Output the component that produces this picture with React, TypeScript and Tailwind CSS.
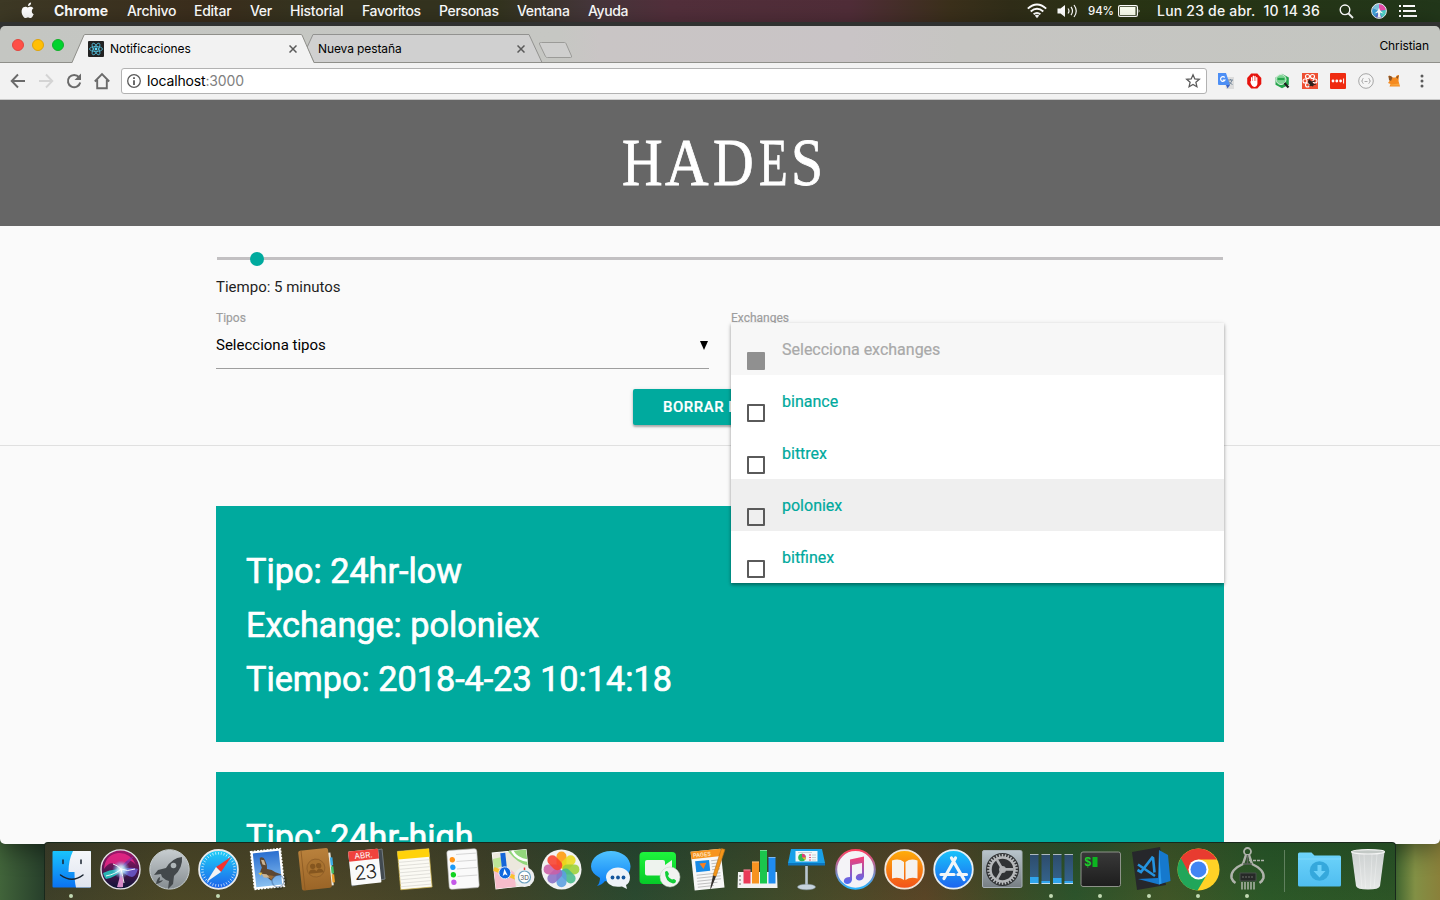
import React from "react";

const menuItems = [
  { label: "Chrome", cls: "w-[73px] font-bold tracking-[0px]" },
  { label: "Archivo", cls: "w-[67px] font-medium tracking-[-0.32px]" },
  { label: "Editar", cls: "w-[56px] font-medium tracking-[-0.25px]" },
  { label: "Ver", cls: "w-[40px] font-medium tracking-[-0.3px]" },
  { label: "Historial", cls: "w-[72px] font-medium tracking-[-0.22px]" },
  { label: "Favoritos", cls: "w-[77px] font-medium tracking-[-0.32px]" },
  { label: "Personas", cls: "w-[78px] font-medium tracking-[-0.35px]" },
  { label: "Ventana", cls: "w-[71px] font-medium tracking-[-0.35px]" },
  { label: "Ayuda", cls: "w-[60px] font-medium tracking-[-0.4px]" },
];

const APPLE =
  "M10.4 5.3c-.02-1.6 1.3-2.4 1.36-2.44-.74-1.08-1.9-1.23-2.3-1.25-.98-.1-1.9.58-2.4.58-.5 0-1.26-.56-2.07-.55C3.92 1.66 2.94 2.26 2.4 3.2c-1.1 1.9-.28 4.74.8 6.3.52.76 1.14 1.6 1.96 1.58.79-.03 1.08-.5 2.03-.5.95 0 1.22.5 2.05.49.85-.02 1.38-.77 1.9-1.53.6-.88.85-1.73.86-1.77-.02-.01-1.6-.62-1.6-2.47z";

function MenuBar() {
  return (
    <div className="flex h-[22px] shrink-0 items-center bg-[linear-gradient(90deg,#3d3925_0,#3b2d1c_210px,#36331f_290px,#33331f_500px,#45363a_590px,#522f3b_670px,#502d38_850px,#3b301b_950px,#302d18_1010px,#293414_1130px,#22371a_1440px)] pl-5 text-[14px] leading-[22px] text-white">
      <div className="w-[34px]">
        <svg width="16" height="18" viewBox="0 0 15 18" fill="white">
          <path transform="translate(-1.2 2.8) scale(1.2)" d={APPLE} />
          <path d="M10.600 0.4c.1 2-1.3 3.4-3.100 3.600C7.300 2 9 .5 10.600.4z" />
        </svg>
      </div>
      {menuItems.map((m) => (
        <span key={m.label} className={"whitespace-nowrap " + m.cls}>
          {m.label}
        </span>
      ))}
      <div className="ml-auto flex items-center">
        <svg width="20" height="16" viewBox="0 0 20 16" fill="none" stroke="white" strokeWidth="1.9" className="mr-[10px]">
          <path d="M.8 5.6Q10-2.600 19.200 5.600" />
          <path d="M3.700 8.500Q10 3 16.300 8.500" />
          <path d="M6.600 11.300Q10 8.500 13.400 11.300" />
          <path d="M7.800 12.600Q10 11 12.200 12.600L10 15.300z" fill="white" stroke="none" />
        </svg>
        <svg width="22" height="16" viewBox="0 0 22 16" fill="none" stroke="white" strokeWidth="1.2" className="mr-[9px]">
          <path d="M.5 5.500h3L8 2v12l-4.500-3.500h-3z" fill="white" stroke="none" />
          <path d="M11 5.500q2 2.500 0 5M14 3.800q3 4.200 0 8.400M17 2q4.500 6 0 12" />
        </svg>
        <span className="w-[30px] whitespace-nowrap text-[11.500px] font-medium tracking-[-0.1px]">94%</span>
        <svg width="23" height="12" viewBox="0 0 23 12">
          <rect x=".6" y=".6" width="18.800" height="10.800" rx="1.500" fill="none" stroke="white" strokeWidth="1.200" />
          <rect x="2" y="2" width="15.500" height="8" fill="#fbfff0" />
          <path d="M20.700 4q1.800 2 0 4z" fill="white" />
        </svg>
        <span className="ml-4 w-[182px] whitespace-nowrap font-medium tracking-[0.21px]">
          Lun 23 de abr.&nbsp; 10 14 36
        </span>
        <svg width="15" height="15" viewBox="0 0 15 15" fill="none" stroke="white" strokeWidth="1.400">
          <circle cx="6" cy="5.800" r="4.800" />
          <path d="M9.500 9.500l4.500 4.500" strokeWidth="1.800" />
        </svg>
        <svg width="16" height="16" viewBox="0 0 16 16" className="ml-[17px]">
          <circle cx="8" cy="8" r="7.400" fill="#5a69c9" />
          <path d="M8 8L1.500 5.500A7 7 0 0 1 8 1z" fill="#7fc4dd" />
          <path d="M8 8V1a7 7 0 0 1 7 6z" fill="#e94ba8" />
          <path d="M8 8L1.500 5.500A7 7 0 0 0 4 14z" fill="#3d9fd8" />
          <path d="M8 8l7-1a7 7 0 0 1-4 7.500z" fill="#4bd3c9" />
          <circle cx="8" cy="8" r="7.400" fill="none" stroke="#eef3ef" />
          <path d="M3 10.500q4-2 5-6 1 4 5 6-3-.5-4-1 0 3 1 5H6.500Q7.500 12 7 9.500q-1.500.7-4 1z" fill="white" />
        </svg>
        <svg width="18" height="12" viewBox="0 0 18 12" className="mr-[23px] ml-3" fill="white">
          <path d="M0 0h2v2H0zM4 0h12v2H4zM0 5h2v2H0zM4 5h13v2H4zM0 10h2v2H0zM4 10h14v2H4z" />
        </svg>
      </div>
    </div>
  );
}

function ReactIcon() {
  return (
    <svg width="16" height="16" viewBox="0 0 16 16">
      <rect width="16" height="16" rx="1" fill="#222" />
      <g fill="none" stroke="#53c1de" strokeWidth=".8">
        <ellipse cx="8" cy="8" rx="6.500" ry="2.500" />
        <ellipse cx="8" cy="8" rx="6.500" ry="2.500" transform="rotate(60 8 8)" />
        <ellipse cx="8" cy="8" rx="6.500" ry="2.500" transform="rotate(120 8 8)" />
      </g>
      <circle cx="8" cy="8" r="1.400" fill="#61dafb" />
    </svg>
  );
}

function CloseMark() {
  return (
    <svg width="8" height="8" viewBox="0 0 8 8" stroke="#5a5a5a" strokeWidth="1.500">
      <path d="M.5.5l7 7M7.500.5l-7 7" />
    </svg>
  );
}

function TabStrip() {
  return (
    <div className="relative h-[37px] shrink-0 rounded-t-[5px] bg-[linear-gradient(90deg,#c4c6c2_0,#c6c7c3_560px,#c9c5c5_600px,#c9c4c6_850px,#c6c5c2_960px,#c4c6c1_1440px)]">
      <svg className="absolute top-0 left-0" width="1440" height="37" viewBox="0 26 1440 37" fill="none" strokeWidth="1">
        <path d="M314 62.500L307 47.500 313 34.500H529L542 62.500z" fill="#d0d0d0" stroke="#929290" />
        <path d="M541.500 42.500h23q1 0 1.500 1l5.500 12.500q.5 1.500-1 1.500h-23q-1.500 0-2-1L539.500 44q-.3-1.500 1-1.500z" fill="#cfcfce" stroke="#9b9b98" />
        <path d="M0 62.500H1440" stroke="#8f8f8a" />
        <path d="M72 63L84 35q.3-.5 1-.5H301q.7 0 1 .5L314 63z" fill="#f2f2f2" />
        <path d="M72 62.500L84 35q.3-.5 1-.5H301q.7 0 1 .5L314 62.500" stroke="#8f8f8a" />
      </svg>
      <div className="relative flex h-full items-center pb-px text-[12px] text-black">
        <div className="ml-3 flex w-[76px] gap-2 pb-0.5 pt-[3px]">
          <i className="h-3 w-3 rounded-full border border-[#e2463f] bg-[#ff4f47]" />
          <i className="h-3 w-3 rounded-full border border-[#dfa30a] bg-[#ffbf05]" />
          <i className="h-3 w-3 rounded-full border border-[#12b02a] bg-[#00d32e]" />
        </div>
        <div className="flex h-full w-[230px] items-center pt-[9px]">
          <ReactIcon />
          <span className="ml-1.5 w-[179px] whitespace-nowrap tracking-[-0.05px]">Notificaciones</span>
          <CloseMark />
        </div>
        <span className="w-[199px] whitespace-nowrap pt-[9px] tracking-[-0.1px]">Nueva pestaña</span>
        <div className="pt-[9px]">
          <CloseMark />
        </div>
        <span className="mr-[11px] ml-auto whitespace-nowrap pt-[3px] tracking-[-0.100px]">Christian</span>
      </div>
    </div>
  );
}

function NavBtn({ d, c }: { d: string; c: string }) {
  return (
    <div className="flex w-7 justify-center">
      <svg width="18" height="18" viewBox="0 0 18 18" fill="none" stroke={c} strokeWidth="1.900">
        <path d={d} />
      </svg>
    </div>
  );
}

function Ext({ children }: { children: React.ReactNode }) {
  return (
    <div className="flex w-7 justify-center">
      <svg width="16" height="16" viewBox="0 0 16 16">
        {children}
      </svg>
    </div>
  );
}

function Toolbar() {
  return (
    <div className="flex h-[37px] shrink-0 items-center border-b border-[#c9c9c9] bg-[#f2f2f2] pl-1">
      <NavBtn c="#6a6a6a" d="M16 9H3M9 2.500L2.700 9 9 15.500" />
      <NavBtn c="#d4d4d4" d="M2 9h13M9 2.500L15.300 9 9 15.500" />
      <div className="flex w-7 justify-center">
        <svg width="18" height="18" viewBox="0 0 18 18">
          <path d="M14 5.200A6.200 6.200 0 1 0 15.200 10.500" fill="none" stroke="#6a6a6a" strokeWidth="2" />
          <path d="M16 1.500V8H9.500z" fill="#6a6a6a" />
        </svg>
      </div>
      <NavBtn c="#6a6a6a" d="M1.800 9.500L9 2.200 16.200 9.500M4.200 8v8.200h9.600V8" />
      <div className="ml-[5px] flex h-[26px] w-[1086px] items-center rounded-[3px] border border-[#b2b2b2] bg-white pl-[5px] text-[14px]">
        <svg width="14" height="14" viewBox="0 0 14 14">
          <circle cx="7" cy="7" r="6.300" fill="none" stroke="#5a5a5a" strokeWidth="1.300" />
          <path d="M6.100 3.200h1.800V5H6.100zM6.100 6.200h1.800V11H6.100z" fill="#5a5a5a" />
        </svg>
        <span className="ml-1.5 pb-px whitespace-nowrap tracking-[-0.15px] text-black">
          localhost<span className="text-[#808080]">:3000</span>
        </span>
        <svg width="16" height="16" viewBox="0 0 16 16" className="mr-[5px] ml-auto" fill="none" stroke="#5a5a5a" strokeWidth="1.300">
          <path d="M8 1.800l1.800 4.100 4.500.4-3.400 3 1 4.400L8 11.400l-3.900 2.300 1-4.400-3.400-3 4.500-.4z" />
        </svg>
      </div>
      <div className="ml-[5px] flex">
        <Ext>
          <path d="M6 4h10v12H8z" fill="#dcdcdc" />
          <path d="M0 0h8l4 12H1q-1 0-1-1z" fill="#4d8ff5" />
          <path d="M8 12h4l-2.500 3.500z" fill="#3a62c4" />
          <path d="M6.700 4.500A2.300 2.300 0 1 0 7 7H4.700" fill="none" stroke="white" strokeWidth="1.200" />
          <path d="M10 7h5M12.500 6v1M14 7q-.5 3-3 4.500M11 8.500q1 2 3.500 3" fill="none" stroke="#6b7f93" strokeWidth=".9" />
        </Ext>
        <Ext>
          <path d="M5.200.5h6.100L15.300 5v6L11.300 15.500H5.200L1.200 11V5z" fill="#e6130d" />
          <path d="M4 8l1 .8V4.500q.7-.8 1.300 0V8h.4V3q.7-.8 1.300 0v5h.4V3.200q.7-.8 1.300 0V8h.4V4.500q.7-.8 1.300 0V11q-.6 3-3.200 3Q6 13.500 5 11z" fill="white" />
        </Ext>
        <Ext>
          <path d="M8 .8l6.800 3.600v7.400L8 15.300 1.500 11.800V4.400z" fill="#25a54c" />
          <circle cx="7" cy="6.500" r="5" fill="#7ed494" stroke="#dceee0" strokeWidth="1" />
          <path d="M3.500 6h7" stroke="#25a54c" strokeWidth="2.200" />
          <path d="M10.500 10l4 4.500" stroke="#1e1e1e" strokeWidth="2.200" />
        </Ext>
        <Ext>
          <rect width="16" height="16" fill="#ee4f32" />
          <g fill="none" stroke="white" strokeWidth="1.100">
            <circle cx="5.500" cy="3.500" r="2" />
            <circle cx="10.500" cy="3.500" r="2" />
            <circle cx="3" cy="8" r="2" />
            <circle cx="13" cy="8" r="2" />
            <circle cx="5.500" cy="12" r="2" />
          </g>
          <path d="M7 6l5 5-1 2.500-3-1-2-4z" fill="#2d211c" />
          <path d="M6 10l7-2M7 13l7-2" stroke="#2d211c" />
        </Ext>
        <Ext>
          <rect width="16" height="16" rx="1" fill="#ef2b10" />
          <circle cx="3" cy="8" r="1.400" fill="white" />
          <circle cx="6.800" cy="8" r="1.400" fill="white" />
          <circle cx="10.600" cy="8" r="1.400" fill="white" />
          <path d="M13.600 5.500v5" stroke="white" />
        </Ext>
        <Ext>
          <circle cx="8" cy="8" r="7.300" fill="#f5f5f5" stroke="#a5a5a5" />
          <path d="M5.500 5.500q-1.200 0-1 1.200T3.500 8q1 .2 1 1.300t1 1.200M10.500 5.500q1.200 0 1 1.200T12.500 8q-1 .2-1 1.300t-1 1.200M6.500 8.500h3" fill="none" stroke="#999" strokeWidth=".8" />
        </Ext>
        <Ext>
          <path d="M2.500 3q2-1 4 1.500h3Q11 1.500 13 2.200L12.500 8l1.500 5.500H3.500L4.500 11 2 10l1.500-2z" fill="#f58a1f" />
          <path d="M2.500 3q2-1 4 1.500L5 8 3 7zM13 2.200L11.500 6 10 4z" fill="#8d5526" />
          <path d="M5 11.500l8-1v2H5z" fill="#f9a53c" />
        </Ext>
        <Ext>
          <g fill="#5a5a5a">
            <circle cx="8" cy="3" r="1.500" />
            <circle cx="8" cy="8" r="1.500" />
            <circle cx="8" cy="13" r="1.500" />
          </g>
        </Ext>
      </div>
    </div>
  );
}

const exchanges = [
  { name: "binance", hover: false },
  { name: "bittrex", hover: false },
  { name: "poloniex", hover: true },
  { name: "bitfinex", hover: false },
];

function ExchangeMenu() {
  return (
    <div className="absolute top-3 left-0 z-10 w-[493px] bg-white text-[16px] leading-[22px] shadow-[0_2px_3px_rgba(0,0,0,0.3),0_1px_5px_rgba(0,0,0,0.14)] [-webkit-text-stroke:0.2px]">
      <div className="flex h-[52px] bg-[#f7f7f7] pl-4 text-[#a9a9a9]">
        <span className="mt-[29px] h-[18px] w-[18px] rounded-[1px] bg-[#909090]" />
        <span className="mt-4 ml-[17px]">Selecciona exchanges</span>
      </div>
      {exchanges.map((e) => (
        <div key={e.name} className={"flex h-[52px] pl-4 text-[#00a99d] " + (e.hover ? "bg-[#efefef]" : "bg-white")}>
          <span className="mt-[29px] h-[18px] w-[18px] rounded-[1px] border-2 border-[#5a5a5a]" />
          <span className="mt-4 ml-[17px]">{e.name}</span>
        </div>
      ))}
    </div>
  );
}

function Card({ lines }: { lines: string[] }) {
  return (
    <div className="h-[236px] shrink-0 bg-[#00aa9e] px-[30px] pt-[38px] text-[34.2px] leading-[54px] text-white [-webkit-text-stroke:0.7px_white]">
      {lines.map((l) => (
        <div key={l} className="whitespace-nowrap">
          {l}
        </div>
      ))}
    </div>
  );
}

function Page() {
  return (
    <div className="flex min-h-0 flex-1 flex-col overflow-hidden rounded-b-[5px] bg-[#fafafa] font-[Roboto,sans-serif] text-[15px] text-[#1f1f1f]">
      <header className="flex h-[126px] shrink-0 justify-center bg-[#666] pt-[27px] pl-[2px] font-['Liberation_Serif',serif] text-[67px] leading-[70px] text-white [-webkit-text-stroke:0.8px_white]">
        <h1 className="whitespace-nowrap">
          <span className="inline-block w-[43px] origin-left scale-x-[0.84]">H</span>
          <span className="inline-block w-[48px] origin-left scale-x-[0.9]">A</span>
          <span className="inline-block w-[46px] origin-left scale-x-[0.84]">D</span>
          <span className="inline-block w-[32px] origin-left scale-x-[0.7]">E</span>
          <span className="inline-block w-[30px] origin-left scale-x-[0.86]">S</span>
        </h1>
      </header>
      <section className="h-[220px] shrink-0 border-b border-[#e0e0e0] px-[216px]">
        <div className="flex h-[65px] items-center">
          <div className="mx-px h-[3px] flex-1 bg-[#c2c0c2]">
            <div className="relative top-[-5px] left-[33px] h-[14px] w-[14px] rounded-full bg-[#00aa9e]" />
          </div>
        </div>
        <p className="-mt-[15px] h-[35px] leading-[22px]">Tiempo: 5 minutos</p>
        <div className="flex">
          <div className="w-[493px]">
            <div className="text-[12px] leading-[14px] text-[#9e9e9e] [-webkit-text-stroke:0.2px]">Tipos</div>
            <div className="flex h-[44px] justify-between border-b border-[#9e9e9e] pt-[9px] leading-[22px]">
              <span className="text-black">Selecciona tipos</span>
              <svg width="8" height="9" viewBox="0 0 8 9" className="mt-[7px] mr-[1px]">
                <path d="M0 0h8L4 9z" fill="black" />
              </svg>
            </div>
          </div>
          <div className="relative ml-[22px] w-[493px]">
            <div className="text-[12px] leading-[14px] text-[#9e9e9e] [-webkit-text-stroke:0.2px]">Exchanges</div>
            <ExchangeMenu />
          </div>
        </div>
        <div className="mx-auto mt-5 h-9 w-[174px] overflow-hidden rounded-[2px] bg-[#00aa9e] pl-[30px] font-medium leading-9 tracking-[0.5px] whitespace-nowrap text-white shadow-[0_2px_2px_rgba(0,0,0,0.25),0_1px_4px_rgba(0,0,0,0.15)] [-webkit-text-stroke:0.2px]">
          BORRAR D
        </div>
      </section>
      <section className="flex flex-col gap-[30px] px-[216px] pt-[60px]">
        <Card lines={["Tipo: 24hr-low", "Exchange: poloniex", "Tiempo: 2018-4-23 10:14:18"]} />
        <Card lines={["Tipo: 24hr-high"]} />
      </section>
    </div>
  );
}

function Defs() {
  const g = (id: string, a: string, b: string) => (
    <linearGradient id={id} x1="0" y1="0" x2="0" y2="1">
      <stop offset="0" stopColor={a} />
      <stop offset="1" stopColor={b} />
    </linearGradient>
  );
  return (
    <svg width="0" height="0" className="absolute">
      <defs>
        {g("gFinder", "#19c4fb", "#0a72f3")}
        {g("gFace", "#f5f7fa", "#dfe4ee")}
        {g("gSilver", "#c7cdd0", "#858c90")}
        {g("gSafari", "#1fd0f8", "#1c62ea")}
        {g("gSky", "#2a6fd0", "#8ac0f0")}
        {g("gLeather", "#b9813c", "#9b6527")}
        {g("gMsg", "#4fc3ff", "#0a7df5")}
        {g("gGreen", "#1ef53d", "#06ca28")}
        {g("gBook", "#ffae09", "#f2511b")}
        {g("gStore", "#19c4fb", "#1d63ef")}
        {g("gFolder", "#6ed4fb", "#4fbdf0")}
        {g("gTrash", "#d6d8da", "#f0f0f2")}
        {g("gNote", "#fa3d72", "#4b6cf8")}
        {g("gPref", "#b9c5cc", "#777e83")}
        {g("gRing", "#ff4060", "#29b6ff")}
        {g("gTerm", "#393939", "#1d1d1d")}
        {g("gCpu", "#2d4b6b", "#35658d")}
        {g("gSiri", "#a3186c", "#0b1436")}
        <radialGradient id="gGlow" cx=".5" cy=".5" r=".5">
          <stop offset="0" stopColor="#ffffff" />
          <stop offset=".4" stopColor="#bdf3ff" stopOpacity=".8" />
          <stop offset="1" stopColor="#63b9ff" stopOpacity="0" />
        </radialGradient>
      </defs>
    </svg>
  );
}

const petals = ["#ff9a0a", "#e8dc1c", "#9bd037", "#46b98b", "#5a9ee0", "#8a6fc6", "#cb5fa6", "#f8402e"];
const ticks = Array.from({ length: 36 }, (_, i) => i * 10);
const teeth = Array.from({ length: 30 }, (_, i) => i * 12);

const dockIcons: { name: string; on?: boolean; art: React.ReactNode }[] = [
  {
    name: "finder",
    on: true,
    art: (
      <>
        <rect x="5.500" y="9" width="38.500" height="36.500" rx="1" fill="url(#gFinder)" />
        <path d="M26 9h17q1 0 1 1v34.500q0 1-1 1H29q-1.500-6-1.500-15.500h-6Q21.500 18 26 9z" fill="url(#gFace)" />
        <path d="M16 18v3.500M34 18v3.500" stroke="#18232f" strokeWidth="1.500" strokeLinecap="round" />
        <path d="M13.500 33q11.500 8.500 22.500 0" fill="none" stroke="#18232f" strokeWidth="1.500" strokeLinecap="round" />
      </>
    ),
  },
  {
    name: "siri",
    art: (
      <>
        <circle cx="24.500" cy="27.400" r="19.500" fill="url(#gSiri)" />
        <path d="M8 27Q9 13 22 11q12-1 18 12-5-6-9-4-3 2-6 9Q16 15 8 27z" fill="#f0288a" opacity=".8" />
        <path d="M7 31q9-5 18-3-6 8-15 9-2-2-3-6z" fill="#25cfc6" opacity=".85" />
        <path d="M25 28q8-4 17-1-2 7-6 8-6-1-11-7z" fill="#6d5fd6" opacity=".8" />
        <path d="M24 28q4 7 3 17-3 .6-6 0 3-8 3-17z" fill="#f79fe0" opacity=".85" />
        <path d="M25 27Q28 19 38 14q-5 8-13 13z" fill="#8e2fa8" opacity=".8" />
        <circle cx="25" cy="27.500" r="9" fill="url(#gGlow)" />
        <path d="M10 34q10-2 15-7 6 3 14 0M25 27q-4-4-8-5M25 27q2 8 3 14" stroke="white" fill="none" strokeWidth="1" opacity=".9" />
        <circle cx="24.500" cy="27.400" r="19.500" fill="none" stroke="#e3e3e8" strokeWidth="1.400" />
      </>
    ),
  },
  {
    name: "launchpad",
    art: (
      <>
        <circle cx="24.500" cy="27.400" r="19.700" fill="url(#gSilver)" stroke="#c7ced0" />
        <path d="M37 15q-10 1-16 11l-8 2-4 5 7-1 1 3 4 3 3 1-1 8 5-5 1-8Q38 26 37 15z" fill="#43484b" />
        <circle cx="28.500" cy="23.500" r="2.800" fill="#aeb5b8" />
        <path d="M15 35q-3 1-4 7 5-1 7-4-3 1-4 1 1-1 1-4z" fill="#43484b" />
      </>
    ),
  },
  {
    name: "safari",
    on: true,
    art: (
      <>
        <circle cx="24.500" cy="27.400" r="19.400" fill="url(#gSafari)" stroke="#e8eaec" strokeWidth="1.800" />
        {ticks.map((t) => (
          <path key={t} d="M24.500 10v2.500" stroke="white" strokeWidth=".6" transform={"rotate(" + t + " 24.500 27.400)"} />
        ))}
        <path d="M37 15L27 30l-5-5z" fill="#f4332f" />
        <path d="M12.500 40L22 25l5 5z" fill="#f3f3f3" />
      </>
    ),
  },
  {
    name: "mail",
    art: (
      <>
        <circle cx="35" cy="39" r="8" fill="none" stroke="#2b2d1f" strokeWidth="2" opacity=".5" />
        <g transform="rotate(-6 24.500 27)">
          <rect x="9.500" y="8" width="30" height="38" fill="white" stroke="white" strokeWidth="1.500" strokeDasharray="2 1.200" />
          <rect x="11.500" y="10" width="26" height="34" fill="url(#gSky)" />
          <path d="M18 15q4-1 5 3 2 5 1 9 5 1 8 4l6 3-7 1-4 4-4-4q-5-2-6-6l2-4q-2-5-1-10z" fill="#5d4731" />
          <path d="M19 17l3 1 1 5-3-1zM18 31l5 1 4 4-7-1z" fill="#c9b394" />
          <path d="M24 33l8 2-5 3z" fill="#9c6a33" />
          <path d="M15 30l4 0-2 3z" fill="#f1c23b" />
        </g>
        <circle cx="35" cy="39" r="6" fill="none" stroke="#2f5688" opacity=".4" strokeWidth="1.500" />
      </>
    ),
  },
  {
    name: "contacts",
    art: (
      <g transform="rotate(-6 24.500 27)">
        <rect x="35" y="12" width="5" height="33" fill="#eceae1" />
        <path d="M39 17h2.500v8H39z" fill="#3aaeea" />
        <path d="M39 26h2.500v7H39z" fill="#40c46a" />
        <path d="M39 34h2.500v8H39z" fill="#f0a22d" />
        <rect x="8" y="7" width="30" height="40" rx="2" fill="url(#gLeather)" />
        <path d="M11 7v40" stroke="#865621" strokeWidth=".7" />
        <circle cx="24" cy="26" r="9" fill="#a8722f" stroke="#8c5c26" strokeWidth=".8" />
        <circle cx="21" cy="24" r="2.700" fill="#85561f" />
        <circle cx="27" cy="24" r="2.700" fill="#85561f" />
        <path d="M16.500 31q0-4 4-4t4 4zM24 31q0-4 3.500-4t4 4z" fill="#85561f" />
      </g>
    ),
  },
  {
    name: "calendar",
    art: (
      <>
        <path d="M8 13l33-6 3 30-33 7z" fill="#424a50" stroke="#737b80" />
        <g transform="rotate(-6 24.500 27)">
          <rect x="9" y="8" width="30" height="34" rx="1" fill="#fafafa" />
          <path d="M9 9q0-1 1-1h28q1 0 1 1v9H9z" fill="#f0423d" />
          <text x="24" y="16" textAnchor="middle" fontFamily="Inter, sans-serif" fontSize="8" fill="white">ABR.</text>
          <text x="24" y="37" textAnchor="middle" fontFamily="Inter, sans-serif" fontSize="19.500" fontWeight="300" letterSpacing="-.8" fill="#222">23</text>
        </g>
      </>
    ),
  },
  {
    name: "notes",
    art: (
      <g transform="rotate(-5 24.500 27)">
        <rect x="9" y="8" width="31.500" height="38.500" fill="#fbfaf4" stroke="#c9ae45" strokeWidth=".7" />
        <rect x="9" y="8" width="31.500" height="8" fill="#ffd20a" />
        <path d="M9 19h31M9 22.500h31M9 26h31M9 29.500h31M9 33h31M9 36.500h31M9 40h31M9 43.500h31" stroke="#d7d6d0" strokeWidth=".7" />
      </g>
    ),
  },
  {
    name: "reminders",
    art: (
      <g transform="rotate(-4 24.500 27)">
        <rect x="9" y="7.500" width="30" height="39" rx="2.500" fill="#fafafa" stroke="#b7b7b7" strokeWidth=".6" />
        <path d="M18 19h20M18 26.500h20M18 34h20M18 12h20" stroke="#c8c8c8" strokeWidth=".7" />
        <circle cx="14" cy="17" r="2.700" fill="#ff9417" />
        <circle cx="14" cy="24.500" r="2.700" fill="#1d9bf6" />
        <circle cx="14" cy="32" r="2.700" fill="#12d321" />
        <circle cx="14" cy="39.500" r="2.700" fill="#c459e8" />
      </g>
    ),
  },
  {
    name: "maps",
    art: (
      <>
        <g transform="rotate(-6 24.500 27)">
          <rect x="6" y="9" width="34" height="36" fill="#ece8dd" stroke="#fafafa" />
          <path d="M6 15l8-1v9l-8 3z" fill="#bce598" />
          <path d="M22 9h18v16q-10-3-18-16z" fill="#92d67c" />
          <path d="M26 9q4 9 14 11" stroke="white" strokeWidth="2.500" fill="none" />
          <path d="M6 27l12-4 8 8v14H6z" fill="#f6bccb" />
          <path d="M6 25l34 18" stroke="#fac230" strokeWidth="4" />
          <path d="M14 10h5v26h-5z" fill="#1566d8" />
          <circle cx="16.500" cy="30" r="6" fill="#1168df" stroke="white" strokeWidth=".8" />
          <path d="M16.500 26l2.500 7-2.500-1.500L14 33z" fill="white" />
        </g>
        <circle cx="36.500" cy="35" r="10" fill="#eceef0" />
        <circle cx="36.500" cy="35" r="6" fill="white" stroke="#6ca2c1" strokeWidth="1.200" />
        <path d="M36.500 25.500v2.500" stroke="#ee3434" strokeWidth="1.500" />
        <text x="36.500" y="37.500" textAnchor="middle" fontFamily="Inter, sans-serif" fontSize="6.500" fill="#555">3D</text>
      </>
    ),
  },
  {
    name: "photos",
    art: (
      <>
        <circle cx="24.500" cy="27.400" r="20" fill="#f2f2f2" />
        {petals.map((c, i) => (
          <rect key={c} x="19.500" y="9.500" width="10" height="17" rx="5" fill={c} opacity=".88" transform={"rotate(" + i * 45 + " 24.500 27.400)"} />
        ))}
      </>
    ),
  },
  {
    name: "messages",
    art: (
      <>
        <path d="M25 9c11 0 19.500 7 19.500 15.500S36 40 25 40q-3 0-6-1-3 4-8 5 3-3 3-8Q5 31 5 24.500C5 16 14 9 25 9z" fill="url(#gMsg)" />
        <path d="M32 25.500c7 0 12 4.500 12 10 0 4-2 6.500-4 7.500l1 4-5-2.500q-15 2-16-9c0-5.500 5-10 12-10z" fill="#eef3f8" />
        <circle cx="26.500" cy="35.500" r="1.900" fill="#15569c" />
        <circle cx="32" cy="35.500" r="1.900" fill="#15569c" />
        <circle cx="37.500" cy="35.500" r="1.900" fill="#15569c" />
      </>
    ),
  },
  {
    name: "facetime",
    art: (
      <>
        <rect x="4.500" y="10" width="36.500" height="32" rx="4" fill="url(#gGreen)" />
        <path d="M12 18h16q2 0 2 2v3l7-5v17l-7-4v1q0 1.500-2 1.500H12q-2 0-2-2V20q0-2 2-2z" fill="#eef3ee" />
        <circle cx="35" cy="35" r="10" fill="#f1f3f1" stroke="#c4cfc4" strokeWidth=".5" />
        <path d="M30 30q2-2 3 0l1 2-1 2q1 2 4 3.500l2-.5 2 1.500q0 3-3 3-8-2-8-11.500z" fill="#12cf38" />
      </>
    ),
  },
  {
    name: "pages",
    art: (
      <>
        <g transform="rotate(-6 24.500 27)">
          <rect x="8.500" y="8" width="30" height="39" fill="#f7f7f7" />
          <rect x="8.500" y="8" width="30" height="7.500" fill="#f7941e" />
          <text x="10.500" y="14" fontFamily="Inter, sans-serif" fontSize="5.500" fontWeight="600" fill="#fde5c5">PAGES</text>
          <rect x="12" y="18" width="14" height="11" fill="#178ae6" />
          <path d="M16 20.500h7l-3.500 6z" fill="#f97e20" />
          <path d="M28 19h8M28 22h8M28 25h8M28 28h8M12 32h24M12 35h24M12 38h24M12 41h20M12 44h16" stroke="#c0c0c0" strokeWidth="1" />
        </g>
        <path d="M37.500 6.500l3.500 1-9 27-3-1z" fill="#f49519" stroke="#b06f18" strokeWidth=".6" />
        <path d="M29 33.500l3 1-4.500 11-1.500 2z" fill="#33302d" />
      </>
    ),
  },
  {
    name: "numbers",
    art: (
      <>
        <path d="M5 30h39l.5 16H4.500z" fill="#f2f2f2" />
        <path d="M7 33v2M7 37v2M7 41v2" stroke="#666" />
        <rect x="10.500" y="27.500" width="7" height="14" fill="#e93a58" />
        <rect x="19" y="19.500" width="7" height="22" fill="#f79321" />
        <rect x="27" y="8" width="7" height="33.500" fill="#1bc64d" />
        <rect x="35.500" y="15" width="7" height="26.500" fill="#1f8cf0" />
        <path d="M10.500 28h7M35.500 15.500h7M27 8.500h7M19 20h7" stroke="white" opacity=".4" />
      </>
    ),
  },
  {
    name: "keynote",
    art: (
      <>
        <path d="M23.200 24h2.600v20h-2.600z" fill="#b9c7d2" />
        <ellipse cx="24.500" cy="45" rx="9" ry="2.800" fill="#c6d3dd" stroke="#899ba9" strokeWidth=".5" />
        <path d="M9 7h31l3 14H6z" fill="#19a0e8" />
        <path d="M6 21h37v2.500H6z" fill="#0e75bd" />
        <path d="M13.500 9h22v10.500h-22z" fill="#f5f7f8" />
        <circle cx="20" cy="15.500" r="3.800" fill="#2dbb57" />
        <path d="M20 15.500h3.800q0-3.800-3.800-3.800z" fill="#e53d77" />
        <path d="M20 15.500l3 2.600q1-1 .8-2.600z" fill="#f6b42c" />
        <path d="M27 13h2M27 15.500h2M27 18h2" stroke="#ea4f7d" />
        <path d="M30 13h4M30 15.500h4M30 18h4M16 10.500h14" stroke="#b9c0c4" strokeWidth=".7" />
      </>
    ),
  },
  {
    name: "itunes",
    art: (
      <>
        <circle cx="24.500" cy="27.400" r="19.300" fill="#f4f3f7" stroke="url(#gRing)" strokeWidth="2" />
        <path d="M19 17.500l14-3v20q-1 4-5 4-4-1-3-4 1-3 6-3V21l-10 2v15q-1 4-5 4-4-1-3-4 1-3 6-3z" fill="url(#gNote)" />
      </>
    ),
  },
  {
    name: "ibooks",
    art: (
      <>
        <circle cx="24.500" cy="27.400" r="19.300" fill="url(#gBook)" stroke="#f0e5da" strokeWidth="1.800" />
        <path d="M24 20q-5-4-12-1.500v18q7-2 12 1.500zM25.500 20q5-4 12-1.500v18q-7-2-12 1.500z" fill="#f5f2ee" />
      </>
    ),
  },
  {
    name: "appstore",
    art: (
      <>
        <circle cx="24.500" cy="27.400" r="19.300" fill="url(#gStore)" stroke="#e7eef3" strokeWidth="1.800" />
        <path d="M26.500 16L15 36.500M22.500 16L35 37.500M12 32.500h13M29 32.500h8.500" stroke="#f3f6f8" strokeWidth="3.200" strokeLinecap="round" fill="none" />
      </>
    ),
  },
  {
    name: "settings",
    art: (
      <>
        <rect x="4.500" y="8.500" width="39.500" height="37" rx="1.500" fill="url(#gPref)" stroke="#a8b1b6" />
        <circle cx="24.500" cy="27.400" r="16.500" fill="#303234" />
        {teeth.map((t) => (
          <path key={t} d="M24.500 12v3" stroke="#babdbf" strokeWidth="1.500" transform={"rotate(" + t + " 24.500 27.400)"} />
        ))}
        <circle cx="24.500" cy="27.400" r="12" fill="#303234" stroke="#b6b8ba" strokeWidth="2.500" />
        <circle cx="24.500" cy="27.400" r="3.500" fill="#a9abad" />
        <path d="M24.500 27.400h11M24.500 27.400l-5.500-9.500M24.500 27.400L19 37" stroke="#b0b2b4" strokeWidth="2.600" />
      </>
    ),
  },
  {
    name: "cpu",
    on: true,
    art: (
      <>
        {[3, 14.500, 26, 37.500].map((x, i) => (
          <g key={x}>
            <rect x={x} y="12" width="8.500" height="30" fill="url(#gCpu)" />
            <path d={"M" + x + " 12.500h8.500"} stroke="#adb8be" />
            <rect x={x} y={[35, 39, 36, 39][i]} width="8.500" height={[6, 2, 5, 2][i]} fill="#2fa5ed" />
            <path d={"M" + x + " 41.500h8.500"} stroke="#c1dcec" />
          </g>
        ))}
      </>
    ),
  },
  {
    name: "terminal",
    on: true,
    art: (
      <>
        <rect x="5" y="10" width="39.500" height="34.500" rx="2" fill="url(#gTerm)" stroke="#8d9289" />
        <text x="8.300" y="24" fontFamily="Liberation Mono, monospace" fontSize="12" fontWeight="700" fill="#1bd12b">$</text>
        <rect x="16.500" y="15" width="5" height="10" fill="#0cb520" />
      </>
    ),
  },
  {
    name: "vscode",
    on: true,
    art: (
      <>
        <path d="M7 10l28-5 6 38-29 5z" fill="#26272b" />
        <path d="M34 8l9 5 2.500 26-11.500 3.500-21-5.500 20-1z" fill="#1679cd" />
        <path d="M34 8l2.500 33.500-2.500 1V37z" fill="#2c9ced" />
        <path d="M28 14.500L16 30l-3.500-2M13 22.500L30 34M28 15.500l1.500 15" fill="none" stroke="#2493df" strokeWidth="2.600" />
      </>
    ),
  },
  {
    name: "chrome",
    on: true,
    art: (
      <>
        <circle cx="24.500" cy="27.400" r="21" fill="#ffd226" />
        <path d="M24.500 17.400h18.300Q36 6.400 24.500 6.400 12 6.800 6.300 17l9 15z" fill="#e83b30" />
        <path d="M6.900 16A21 21 0 0 0 23.500 48.400L33 32.400l-17.500 0z" fill="#21a65a" />
        <circle cx="24.500" cy="27.400" r="10" fill="white" />
        <circle cx="24.500" cy="27.400" r="8" fill="#4185f3" />
      </>
    ),
  },
  {
    name: "caliper",
    on: true,
    art: (
      <>
        <g fill="none" stroke="#afb3ab">
          <circle cx="24.500" cy="9.500" r="3.500" strokeWidth="1.800" />
          <path d="M23 13L20 22q-13 6-11.500 14 1 3 4 5M26 13l3 9q13 6 11.500 14-1 3-4 5" strokeWidth="2.400" />
          <path d="M26 18.500h15" strokeWidth="1.500" strokeDasharray="3 1" />
        </g>
        <path d="M20 22h9M24.500 13v9" stroke="#5e635c" strokeWidth="1.500" />
        <path d="M17 31h16v8H17z" fill="#262927" stroke="#47504a" />
        <path d="M19 40v7.500M22 40v7.500M25 40v7.500M28 40v7.500M31 40v7.500" stroke="#c0c3bc" strokeWidth="1.300" />
        <path d="M19 35h12" stroke="#7b807a" strokeWidth=".8" strokeDasharray="2 1" />
      </>
    ),
  },
];

function Dock() {
  return (
    <div className="absolute top-[842px] left-11 flex h-[58px] w-[1352px] rounded-t-[4px] border border-b-0 border-[#18281b] bg-[linear-gradient(180deg,rgba(20,20,20,0.18),rgba(80,70,30,0.12)),linear-gradient(90deg,#3c3f2a_0,#4c4827_130px,#4c4729_290px,#404329_440px,#264a32_590px,#364c2d_690px,#4b4b2a_800px,#5b4527_880px,#3c4d28_960px,#28562d_1030px,#3e5828_1120px,#275b29_1220px,#285727_1352px)] pl-[1.500px]">
      {dockIcons.map((icon) => (
        <svg key={icon.name} width="49" height="58" viewBox="0 0 49 58" className="-mt-px shrink-0 overflow-visible">
          {icon.art}
          {icon.on && <circle cx="24" cy="54" r="2" fill="#c2d9b3" />}
        </svg>
      ))}
      <div className="mt-[7px] ml-[12px] h-[42px] w-px shrink-0 bg-[#60805e]" />
      <svg width="49" height="58" viewBox="0 0 49 58" className="-mt-px ml-[11px] shrink-0">
        <path d="M2 12q0-1.500 1.500-1.500h12l3 3h25q1.500 0 1.500 1.500v28q0 1.500-1.500 1.500h-40q-1.500 0-1.500-1.500z" fill="url(#gFolder)" />
        <path d="M2 17h43" stroke="#90e1ff" strokeWidth=".6" />
        <circle cx="23.500" cy="29" r="9.800" fill="#35a8dc" />
        <path d="M21.500 23h4v6h4l-6 6.500-6-6.500h4z" fill="#6dd1fa" />
      </svg>
      <svg width="49" height="58" viewBox="0 0 49 58" className="-mt-px shrink-0">
        <path d="M6.500 10h33L35 44q-1 3.500-12 3.500T11 44z" fill="url(#gTrash)" opacity=".95" />
        <path d="M14 12l3 34M19 12l1.500 34M27 12l-1.500 34M32 12l-3 34" stroke="white" opacity=".3" />
        <ellipse cx="23" cy="9.800" rx="16.500" ry="2.200" fill="#c3c9c6" stroke="#f5f5f5" strokeWidth="1.200" />
      </svg>
    </div>
  );
}

export default function App() {
  return (
    <div className="relative flex h-[900px] w-[1440px] flex-col overflow-hidden bg-[linear-gradient(90deg,#41643a_0,#273f2b_44px,#2c5829_1390px,#829045_1415px,#8a803a_1440px)] font-[Inter,sans-serif]">
      <Defs />
      <MenuBar />
      <div className="flex h-[822px] shrink-0 flex-col rounded-b-[6px] bg-[#303130] pt-1 shadow-[0_6px_24px_rgba(0,0,0,0.45)]">
        <TabStrip />
        <Toolbar />
        <Page />
      </div>
      <Dock />
    </div>
  );
}
